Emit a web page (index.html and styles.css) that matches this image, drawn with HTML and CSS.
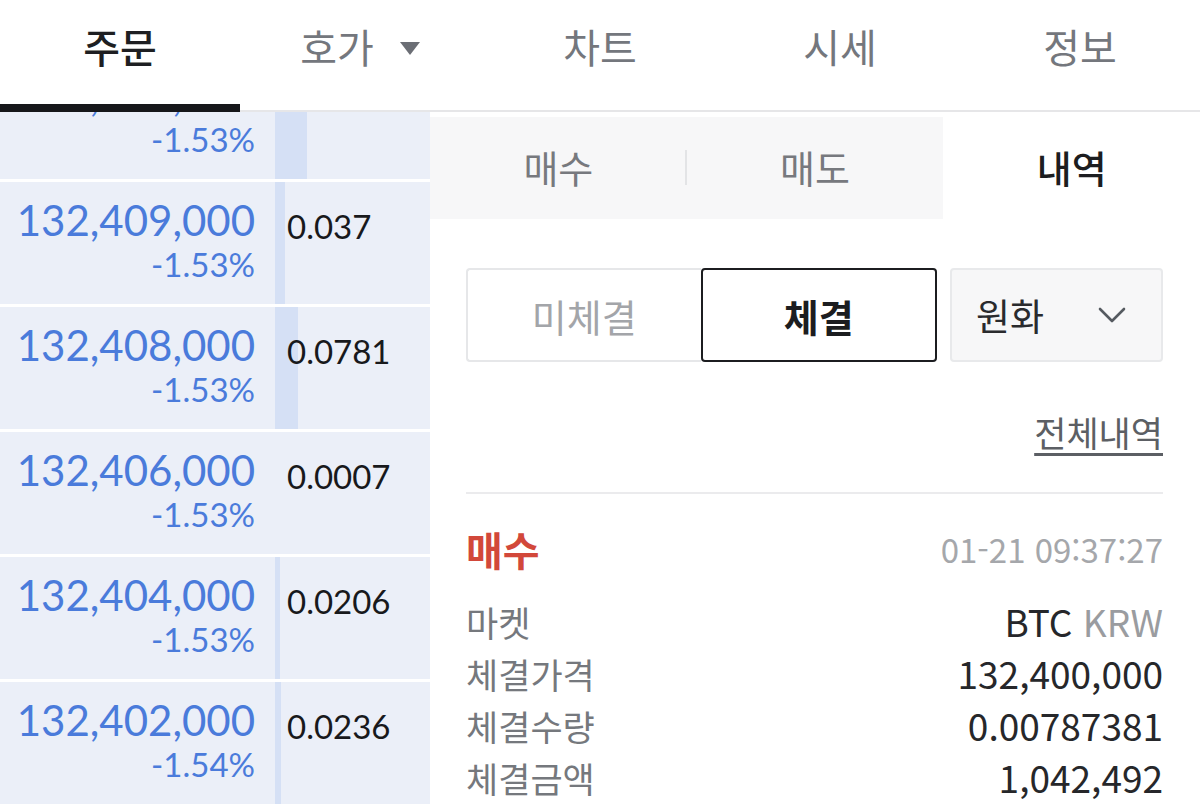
FILE: index.html
```html
<!DOCTYPE html>
<html lang="ko">
<head>
  <meta charset="UTF-8">
  <meta name="viewport" content="width=device-width, initial-scale=1.0">
  <title>주문</title>
  <link rel="stylesheet" href="styles.css">
</head>
<body>
  <nav class="tabs">
    <div class="tab active">주문</div>
    <div class="tab">호가<span class="caret"></span></div>
    <div class="tab">차트</div>
    <div class="tab">시세</div>
    <div class="tab">정보</div>
  </nav>

  <div class="main">
    <div class="orderbook">
      <div class="row first">
        <div class="price"><span class="num">132,410,000</span><span class="pct">-1.53%</span></div>
        <div class="qty"><span class="bar" style="width: 32px"></span><span class="amount"></span></div>
      </div>
      <div class="row">
        <div class="price"><span class="num">132,409,000</span><span class="pct">-1.53%</span></div>
        <div class="qty"><span class="bar" style="width: 10px"></span><span class="amount">0.037</span></div>
      </div>
      <div class="row">
        <div class="price"><span class="num">132,408,000</span><span class="pct">-1.53%</span></div>
        <div class="qty"><span class="bar" style="width: 23px"></span><span class="amount">0.0781</span></div>
      </div>
      <div class="row">
        <div class="price"><span class="num">132,406,000</span><span class="pct">-1.53%</span></div>
        <div class="qty"><span class="bar" style="width: 0px"></span><span class="amount">0.0007</span></div>
      </div>
      <div class="row">
        <div class="price"><span class="num">132,404,000</span><span class="pct">-1.53%</span></div>
        <div class="qty"><span class="bar" style="width: 5px"></span><span class="amount">0.0206</span></div>
      </div>
      <div class="row">
        <div class="price"><span class="num">132,402,000</span><span class="pct">-1.54%</span></div>
        <div class="qty"><span class="bar" style="width: 6px"></span><span class="amount">0.0236</span></div>
      </div>
    </div>

    <div class="panel">
      <div class="subtabs">
        <div class="subtab sep">매수</div>
        <div class="subtab">매도</div>
        <div class="subtab active">내역</div>
      </div>

      <div class="content">
        <div class="filters">
          <div class="segment">
            <div class="seg">미체결</div>
            <div class="seg on">체결</div>
          </div>
          <div class="select">
            <span>원화</span>
            <svg width="30" height="18" viewBox="0 0 30 18"><path d="M3 3 L15 15 L27 3" fill="none" stroke="#555a60" stroke-width="2.6" stroke-linecap="round" stroke-linejoin="round"/></svg>
          </div>
        </div>

        <div class="more"><a>전체내역</a></div>

        <div class="trade">
          <div class="trade-head">
            <span class="side">매수</span>
            <span class="time">01-21 09:37:27</span>
          </div>
          <div class="line"><span class="label">마켓</span><span class="value">BTC <span class="unit">KRW</span></span></div>
          <div class="line"><span class="label">체결가격</span><span class="value">132,400,000</span></div>
          <div class="line"><span class="label">체결수량</span><span class="value">0.00787381</span></div>
          <div class="line"><span class="label">체결금액</span><span class="value">1,042,492</span></div>
        </div>
      </div>
    </div>
  </div>
</body>
</html>
```

FILE: styles.css
```css
body {
  margin: 0;
  width: 1200px;
  height: 808px;
  overflow: hidden;
  background-color: #fff;
  font-family: "Noto Sans CJK KR", "Noto Sans", sans-serif;
}

.tabs {
  display: flex;
  height: 110px;
  border-bottom: 2px solid #e6e6e8;
}

.tab {
  flex: 1;
  position: relative;
  display: flex;
  align-items: center;
  justify-content: center;
  padding-bottom: 18px;
  font-size: 40px;
  color: #74777d;
}

.tab.active {
  color: #1e1f22;
  font-weight: 500;
}

.tab.active::after {
  content: "";
  position: absolute;
  left: 0;
  right: 0;
  bottom: -2px;
  height: 8px;
  background-color: #16171a;
}

.caret {
  display: inline-block;
  margin-left: 26px;
  margin-top: 4px;
  border-left: 10px solid transparent;
  border-right: 10px solid transparent;
  border-top: 13px solid #6b6e75;
}

.main {
  display: flex;
  height: 696px;
}

.orderbook {
  width: 430px;
  overflow: hidden;
  font-family: Lato, "Noto Sans CJK KR", sans-serif;
}

.row {
  display: flex;
  height: 122px;
  margin-bottom: 3px;
  background-color: #ebeff8;
}

.row.first {
  margin-top: -55px;
}

.price {
  width: 255px;
  padding-right: 20px;
  display: flex;
  flex-direction: column;
  align-items: flex-end;
  color: #4a7bdb;
}

.price .num {
  font-size: 42px;
  line-height: 48px;
  margin-top: 14px;
}

.price .pct {
  font-size: 33px;
  line-height: 38px;
  margin-top: 1px;
}

.qty {
  flex: 1;
  position: relative;
}

.bar {
  position: absolute;
  left: 0;
  top: 0;
  bottom: 0;
  background-color: #d5e0f5;
}

.amount {
  position: relative;
  display: block;
  padding-left: 12px;
  margin-top: 24px;
  font-size: 33px;
  line-height: 40px;
  color: #18191c;
}

.panel {
  flex: 1;
}

.subtabs {
  display: flex;
  height: 102px;
  margin-top: 5px;
}

.subtab {
  flex: 1;
  display: flex;
  align-items: center;
  justify-content: center;
  padding-bottom: 4px;
  background-color: #f7f7f8;
  font-size: 38px;
  color: #77797e;
  position: relative;
}

.subtab.sep::after {
  content: "";
  position: absolute;
  right: 0;
  top: 33px;
  height: 35px;
  width: 2px;
  background-color: #e3e4e6;
}

.subtab.active {
  background-color: #fff;
  color: #1c1d20;
  font-weight: 500;
}

.content {
  padding: 0 37px 0 36px;
}

.filters {
  display: flex;
  margin-top: 49px;
  height: 94px;
}

.segment {
  display: flex;
  width: 471px;
}

.seg {
  flex: 1;
  display: flex;
  align-items: center;
  justify-content: center;
  border: 2px solid #e6e7e9;
  border-right: none;
  border-radius: 4px 0 0 4px;
  font-size: 38px;
  color: #a3a5a9;
}

.seg.on {
  border: 2px solid #1c1d20;
  border-radius: 4px;
  color: #1c1d20;
  font-weight: 700;
}

.select {
  flex: 1;
  margin-left: 13px;
  display: flex;
  align-items: center;
  justify-content: space-between;
  padding: 0 34px 0 24px;
  background-color: #f7f7f8;
  border: 2px solid #e8e9eb;
  border-radius: 4px;
  font-size: 37px;
  color: #2a2b2e;
}

.more {
  text-align: right;
  margin-top: 44px;
  height: 86px;
  border-bottom: 2px solid #ebebed;
}

.more a {
  font-size: 35px;
  color: #5c5f64;
  text-decoration: underline;
  text-underline-offset: 6px;
}

.trade-head {
  display: flex;
  justify-content: space-between;
  align-items: center;
  margin-top: 29px;
  height: 52px;
}

.side {
  font-size: 40px;
  font-weight: 700;
  color: #d2483a;
}

.time {
  font-size: 33px;
  color: #a5a7ab;
}

.line {
  display: flex;
  justify-content: space-between;
  align-items: center;
  height: 52px;
}

.trade-head + .line {
  margin-top: 20px;
}

.label {
  font-size: 35px;
  color: #75787d;
}

.value {
  font-size: 37px;
  color: #26272a;
}

.unit {
  color: #9a9ca0;
}
```
